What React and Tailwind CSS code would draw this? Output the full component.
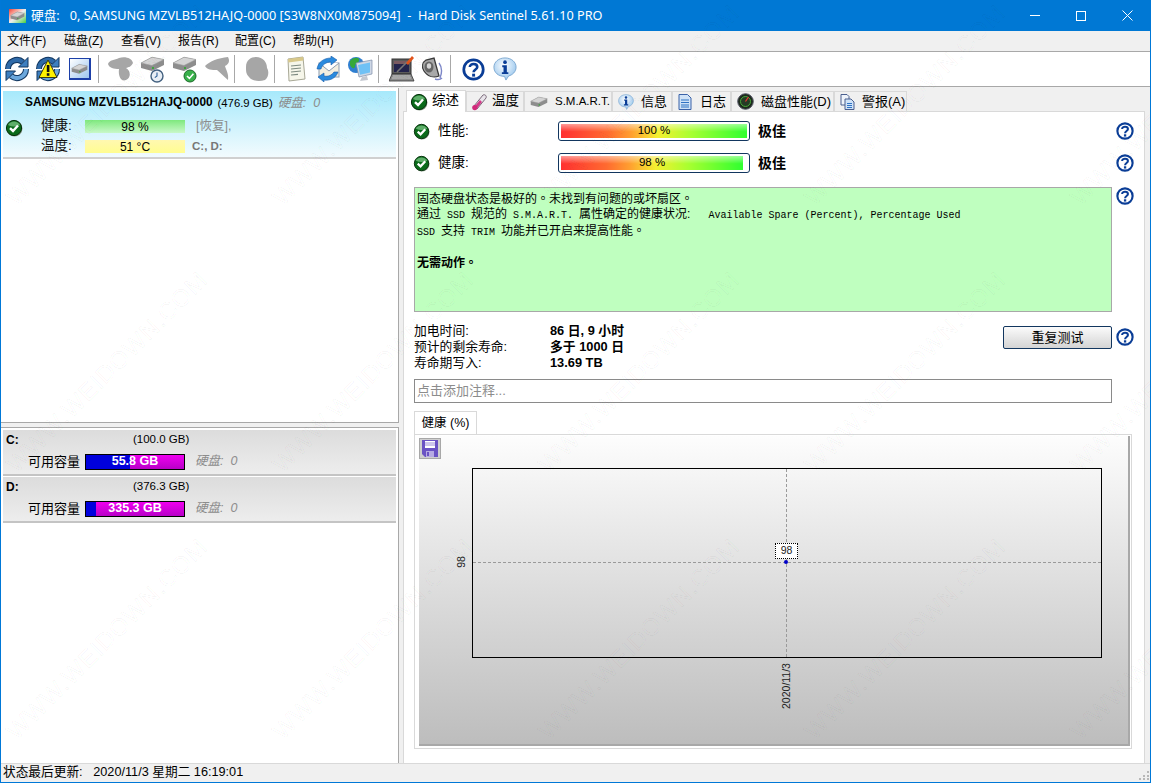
import React from "react";

const SANS = "font-['Liberation_Sans','Noto_Sans_CJK_SC',sans-serif]";

function Check({ size = 18 }) {
  return (
    <svg width={size} height={size} viewBox="0 0 18 18" className="shrink-0">
      <circle cx="9.5" cy="9.5" r="8" fill="#8a9a8a" />
      <circle cx="9" cy="9" r="7.6" fill="#0a6a1a" stroke="#06300c" strokeWidth="1" />
      <path d="M3 6 A7 7 0 0 1 15 6 Q9 9 3 6Z" fill="#5fae6a" />
      <path d="M5 9.2 L8 12 L13 6.5" fill="none" stroke="#fff" strokeWidth="2.4" />
    </svg>
  );
}

function Help({ size = 18 }) {
  return (
    <svg width={size} height={size} viewBox="0 0 22 22" className="shrink-0">
      <circle cx="11" cy="11" r="9.3" fill="#fff" stroke="#0a3d96" strokeWidth="2.6" />
      <path d="M7.5 8.5 C7.5 4.8 14.6 4.8 14.6 8.6 C14.6 11 11.1 11 11.1 13.6" fill="none" stroke="#0a3d96" strokeWidth="2.5" />
      <rect x="9.7" y="15" width="2.8" height="2.8" fill="#0a3d96" />
    </svg>
  );
}

function Info({ size = 26 }) {
  return (
    <svg width={size} height={size} viewBox="0 0 26 26" className="shrink-0">
      <defs>
        <radialGradient id="ib" cx="0.45" cy="0.35" r="0.7">
          <stop offset="0" stopColor="#ffffff" />
          <stop offset="1" stopColor="#8fc1ec" />
        </radialGradient>
      </defs>
      <path d="M13 1 C20 1 25 5.5 25 11 C25 16 21 19.5 17 20.5 L14 25 L12.5 21 C6 21 1 17 1 11 C1 5.5 6 1 13 1Z" fill="url(#ib)" stroke="#7aa6cf" />
      <circle cx="13" cy="5.6" r="2" fill="#0a3d96" />
      <path d="M10 9 H15 V16.5 H16.6 V18.5 H9.6 V16.5 H11.4 V11 H10Z" fill="#0a3d96" />
    </svg>
  );
}

function Refresh({ warn }) {
  return (
    <svg width="28" height="28" viewBox="0 0 28 28">
      <path d="M5 14 A9 9 0 0 1 20 7.3" fill="none" stroke="#12365f" strokeWidth="6" />
      <path d="M5 14 A9 9 0 0 1 20 7.3" fill="none" stroke="#2f6aa8" strokeWidth="4" />
      <path d="M23 14 A9 9 0 0 1 8 20.7" fill="none" stroke="#12365f" strokeWidth="6" />
      <path d="M23 14 A9 9 0 0 1 8 20.7" fill="none" stroke="#6ba7dc" strokeWidth="4" />
      <path d="M25 2.5 V12 H15.5Z" fill="#3d7fc0" stroke="#12365f" strokeWidth="1" />
      <path d="M3 25.5 V16 H12.5Z" fill="#3d7fc0" stroke="#12365f" strokeWidth="1" />
      {warn && (
        <>
          <path d="M14 5 L23 22.5 H5Z" fill="#fff200" stroke="#3a3a10" strokeWidth="1" />
          <rect x="12.8" y="10" width="2.6" height="7" fill="#111" />
          <rect x="12.8" y="18.2" width="2.6" height="2.6" fill="#111" />
        </>
      )}
    </svg>
  );
}

function DiskShape() {
  return (
    <g>
      <path d="M1 7 L12 1 L24 3.5 V9 L12 15 L1 12Z" fill="#8d8d8d" />
      <path d="M1 7 L12 1.2 L24 3.5 L12 9.5Z" fill="#d4d4d4" stroke="#9a9a9a" strokeWidth="0.6" />
      <rect x="12" y="11" width="2" height="2" fill="#3fa33f" />
    </g>
  );
}

function DiskButton() {
  return (
    <div className="w-[22px] h-[22px] border border-[#1c3fa8] bg-linear-to-br from-[#ffffff] to-[#9ec6ee] border-r-2 border-b-2 flex items-center justify-center">
      <svg width="17" height="14" viewBox="0 0 25 16"><DiskShape /></svg>
    </div>
  );
}

function Blob1() {
  return (
    <svg width="27" height="26" viewBox="0 0 27 26">
      <path d="M1 8 C2 4 8 4 12 2 C18 0 25 2 26 7 C24 11 22 11 19 12 C24 15 24 22 19 24 C14 26 11 20 12 13 C7 13 2 12 1 8Z" fill="#a6a6a6" />
    </svg>
  );
}
function Blob2() {
  return (
    <svg width="26" height="26" viewBox="0 0 26 26">
      <path d="M1 10 C6 5 14 2 24 1 C26 5 25 8 21 10 C22 14 25 18 24 24 C20 21 17 17 13 14 C8 14 3 14 1 10Z" fill="#a6a6a6" />
    </svg>
  );
}
function Blob3() {
  return (
    <svg width="26" height="26" viewBox="0 0 26 26">
      <path d="M2 11 C2 4 7 1 12 1 C19 1 23 6 23 12 C25 15 25 21 21 24 C15 26 8 25 5 21 C2 18 2 15 2 11Z" fill="#a6a6a6" />
    </svg>
  );
}
function DiskClock({ ok }) {
  return (
    <svg width="27" height="27" viewBox="0 0 27 27">
      <DiskShape />
      {ok ? (
        <>
          <circle cx="18" cy="20" r="6" fill="#38b04a" stroke="#1c6a2a" />
          <path d="M15 20 L17.4 22.4 L21.4 17.8" fill="none" stroke="#fff" strokeWidth="1.6" />
        </>
      ) : (
        <>
          <circle cx="17" cy="20" r="6" fill="#e8eef5" stroke="#43607f" strokeWidth="1.4" />
          <path d="M17 16.5 V20 L14.8 21.6" fill="none" stroke="#2d5f96" strokeWidth="1.1" />
        </>
      )}
    </svg>
  );
}
function Notes() {
  return (
    <svg width="22" height="26" viewBox="0 0 22 26">
      <path d="M3 3 L18 1 L20 23 L4 25Z" fill="#f6f6ea" stroke="#a8a896" />
      <path d="M3 3 L18 1 L18.4 4.5 L3.4 6.5Z" fill="#d8c88a" />
      <path d="M6 10 L16 9 M6 13 L16 12 M6 16 L16 15 M6 19 L13 18.4" stroke="#7d8a80" strokeWidth="1.2" />
    </svg>
  );
}
function MailIcon() {
  return (
    <svg width="24" height="26" viewBox="0 0 24 26">
      <rect x="3" y="7" width="20" height="14" fill="#f2eee0" stroke="#8b9bb0" />
      <path d="M3 7 L13 15 L23 7" fill="#fff" stroke="#8b9bb0" />
      <path d="M1 13 C2 6 8 2 15 2 L15 0 L21 4 L15 9 L15 6 C10 6 6 9 5 13Z" fill="#2a8ade" stroke="#1a5da8" strokeWidth="0.6" />
      <path d="M22 16 C20 22 14 25 8 24 L8 26 L2 21 L8 17 L8 20 C12 21 16 19 18 16Z" fill="#2a8ade" stroke="#1a5da8" strokeWidth="0.6" />
    </svg>
  );
}
function GlobeIcon() {
  return (
    <svg width="26" height="26" viewBox="0 0 26 26">
      <circle cx="9" cy="9" r="8" fill="#2f7fd0" />
      <path d="M3 5 C6 1 11 1 12 3 C13 7 8 7 8 10 C8 14 4 12 3 9Z" fill="#35a83a" />
      <path d="M9 7 L25 4 V18 L12 21Z" fill="#cfd8e6" stroke="#7e8ea8" strokeWidth="0.7" />
      <path d="M11 9 L23 6.6 V16.6 L13 18.8Z" fill="#6fc1f5" />
      <path d="M15 21 L20 20 L21 24 L13 25Z" fill="#c4c8d0" />
    </svg>
  );
}
function LaptopIcon() {
  return (
    <svg width="26" height="28" viewBox="0 0 26 28">
      <rect x="3" y="4" width="19" height="15" fill="#5c5c5c" stroke="#333" />
      <rect x="5" y="6" width="15" height="11" fill="#24244c" />
      <path d="M5 6 H20 V9 H5Z" fill="#7a5a60" />
      <path d="M3 19 H22 L25 26 H0Z" fill="#8e8e8e" stroke="#333" strokeWidth="0.8" />
      <path d="M4 21 H21 M3 23 H22" stroke="#d0d0d0" strokeWidth="0.8" />
      <path d="M8 17 L18 7" stroke="#777" strokeWidth="1.6" />
      <path d="M17 8 L23 1 L25 3 L19 10Z" fill="#e2531a" />
    </svg>
  );
}
function SpeakerIcon() {
  return (
    <svg width="24" height="26" viewBox="0 0 24 26">
      <path d="M14 2 L19 20 C14 22 8 21 4 15 C1 10 3 6 6 4Z" fill="#a9a9a9" stroke="#3a3a3a" strokeWidth="1.3" />
      <ellipse cx="9" cy="11" rx="4.5" ry="5.5" fill="#666" />
      <ellipse cx="9" cy="10" rx="2.2" ry="2.8" fill="#d5d5d5" />
      <path d="M19 7 C22 11 22 17 20 22 M15 23 C18 24 20 24 22 22" fill="none" stroke="#7d87c8" strokeWidth="1.4" />
    </svg>
  );
}
function Thermo() {
  return (
    <svg width="17" height="18" viewBox="0 0 17 18">
      <path d="M3 13 L12 2 C14 1 16 3 15 5 L6 16Z" fill="#e8e4ea" stroke="#7a6a7a" />
      <path d="M3.5 13.5 L9 7 L11 9 L6 15.5Z" fill="#d43a8a" />
      <circle cx="3.8" cy="14.6" r="2.6" fill="#d02a7a" />
    </svg>
  );
}
function SmallDisk() {
  return <svg width="18" height="12" viewBox="0 0 25 16"><DiskShape /></svg>;
}
function Doc() {
  return (
    <svg width="14" height="16" viewBox="0 0 14 16">
      <path d="M1 0.5 H9.5 L13 4 V15.5 H1Z" fill="#cfe2f7" stroke="#3a62a8" />
      <path d="M3 6 H11 M3 8.5 H11 M3 11 H11 M3 13 H11" stroke="#2f72c4" strokeWidth="1.1" />
    </svg>
  );
}
function Gauge() {
  return (
    <svg width="17" height="17" viewBox="0 0 17 17">
      <circle cx="8.5" cy="8.5" r="7.8" fill="#1c2a1c" stroke="#556" />
      <circle cx="8.5" cy="8.5" r="5" fill="#253a25" stroke="#49a83a" strokeWidth="1" />
      <path d="M8.5 8.5 L11.5 4" stroke="#e33" strokeWidth="1.2" />
    </svg>
  );
}
function Docs() {
  return (
    <svg width="15" height="16" viewBox="0 0 15 16">
      <path d="M1 0.5 H7 L9 2.5 V11 H1Z" fill="#eef3fa" stroke="#4a5f8f" />
      <path d="M5 5 H11 L14 8 V15.5 H5Z" fill="#cfe2f7" stroke="#4a5f8f" />
      <path d="M7 9.5 H12 M7 11.5 H12 M7 13.5 H12" stroke="#2f72c4" />
    </svg>
  );
}
function Save() {
  return (
    <div className="w-[22px] h-[21px] bg-[#cfcfcf] border border-[#a8a8a8] flex items-center justify-center">
      <svg width="16" height="17" viewBox="0 0 16 17">
        <path d="M0 0 H16 V17 H3 L0 14Z" fill="#6a52c4" />
        <rect x="3" y="1" width="10" height="7" fill="#fff" />
        <path d="M3 3 H13 M3 5 H13" stroke="#9a8ad8" />
        <rect x="4" y="11" width="8" height="6" fill="#b7abe3" />
        <rect x="5" y="12" width="2" height="4" fill="#6a52c4" />
      </svg>
    </div>
  );
}

const Sep = () => <div className="w-[2px] h-[28px] bg-[#a8a8a8] border-r border-white shrink-0" />;

function Menu({ zh, k, w }) {
  return <span className={w}>{zh}({k})</span>;
}

function Tab({ icon, label, w, active, text = "text-[13px]", pad = "gap-[7px] pl-[5px]" }) {
  return (
    <div
      className={
        active
          ? `${w} h-[22px] -mb-px z-10 bg-white border border-b-0 border-[#d9d9d9] flex items-center gap-[4px] pl-[3px]`
          : `${w} h-[20px] bg-[#f0f0f0] border border-b-0 border-[#d9d9d9] flex items-center ${pad} overflow-hidden whitespace-nowrap`
      }
    >
      {icon}
      <span className={`${text} text-black`}>{label}</span>
    </div>
  );
}

function LevelBar({ pct, right }) {
  return (
    <div className="w-[192px] h-[20px] border border-[#12365f] rounded-[3px] p-[2px] bg-white">
      <div className={`h-full ${right} relative bg-[linear-gradient(to_bottom,rgba(255,255,255,0.5),rgba(255,255,255,0)_55%),linear-gradient(to_right,#ff3030,#ff6a30_25%,#ffa030_38%,#f5f030_52%,#a8ff30_70%,#30ff30)] flex items-center justify-center text-[11.5px] text-black`}>
        {pct}
      </div>
    </div>
  );
}

function PartRow({ letter, size, free, blue, boxClass }) {
  return (
    <div className={`${boxClass} mx-[2px] bg-linear-to-b from-[#dcdcdc] to-[#ededed] border-b-[2px] border-[#c4c4c4]`}>
      <div className="flex h-[20px] items-center text-[11.5px]">
        <span className="font-bold w-[130px] pl-[3px] text-[12px]">{letter}</span>
        <span>{size}</span>
      </div>
      <div className="flex items-center mt-[3px] h-[17px] text-[12.5px]">
        <span className="w-[82px] pl-[25px] whitespace-nowrap text-[13px]">可用容量</span>
        <div className="relative w-[100px] h-[16px] border border-black bg-linear-to-b from-[#f000f0] to-[#b800c8] flex items-center justify-center">
          <div className={`absolute left-0 top-0 bottom-0 ${blue} bg-[#0000dc]`} />
          <span className="relative text-white font-bold text-[12.5px]">{free}</span>
        </div>
        <span className="ml-[10px] italic text-[#8c8c8c] text-[12.5px]">硬盘:&nbsp; 0</span>
      </div>
    </div>
  );
}

const Mono = ({ children }) => <span className="text-[10px] leading-none font-['Liberation_Mono',monospace]">{children}</span>;

const marks = Array.from({ length: 20 });

export default function App() {
  return (
    <div className={`relative w-[1151px] h-[783px] overflow-hidden flex flex-col bg-[#f0f0f0] border-x border-b border-[#0078d7] text-black ${SANS}`}>
      {/* title bar */}
      <div className="h-[31px] shrink-0 bg-[#0078d4] flex items-center text-white text-[12.7px] font-['Noto_Sans','Noto_Sans_CJK_SC',sans-serif]">
        <div className="ml-[8px] w-[17px] h-[14px] bg-linear-to-br from-[#e33] via-[#eee] to-[#3c3] flex items-center justify-center">
          <svg width="15" height="10" viewBox="0 0 25 16"><DiskShape /></svg>
        </div>
        <span className="ml-[5px] whitespace-pre">硬盘:   0, SAMSUNG MZVLB512HAJQ-0000 [S3W8NX0M875094]  -  Hard Disk Sentinel 5.61.10 PRO</span>
        <div className="ml-auto flex items-center">
          <div className="w-[46px] flex justify-center"><div className="w-[10px] h-px bg-white" /></div>
          <div className="w-[46px] flex justify-center"><div className="w-[10px] h-[10px] border border-white" /></div>
          <div className="w-[46px] flex justify-center">
            <svg width="11" height="11" viewBox="0 0 11 11"><path d="M0.5 0.5 L10.5 10.5 M10.5 0.5 L0.5 10.5" stroke="#fff" /></svg>
          </div>
        </div>
      </div>
      {/* menu bar */}
      <div className="h-[20px] shrink-0 bg-[#f0f0f0] flex items-center pl-[6px] text-[12px]">
        <Menu zh="文件" k="F" w="w-[57px]" />
        <Menu zh="磁盘" k="Z" w="w-[57px]" />
        <Menu zh="查看" k="V" w="w-[57px]" />
        <Menu zh="报告" k="R" w="w-[57px]" />
        <Menu zh="配置" k="C" w="w-[58px]" />
        <Menu zh="帮助" k="H" w="w-[57px]" />
      </div>
      {/* toolbar */}
      <div className="h-[36px] shrink-0 bg-white border-y border-[#a8a8a8] flex items-center pl-[2px]">
        <div className="w-[28px] flex justify-center"><Refresh /></div>
        <div className="w-[28px] ml-[3px] flex justify-center"><Refresh warn /></div>
        <div className="ml-[7px]"><DiskButton /></div>
        <div className="ml-[7px]"><Sep /></div>
        <div className="ml-[7px]"><Blob1 /></div>
        <div className="ml-[6px]"><DiskClock /></div>
        <div className="ml-[5px]"><DiskClock ok /></div>
        <div className="ml-[5px]"><Blob2 /></div>
        <div className="ml-[4px]"><Sep /></div>
        <div className="ml-[8px]"><Blob3 /></div>
        <div className="ml-[4px]"><Sep /></div>
        <div className="ml-[9px]"><Notes /></div>
        <div className="ml-[9px]"><MailIcon /></div>
        <div className="ml-[7px]"><GlobeIcon /></div>
        <div className="ml-[5px]"><Sep /></div>
        <div className="ml-[9px]"><LaptopIcon /></div>
        <div className="ml-[5px]"><SpeakerIcon /></div>
        <div className="ml-[6px]"><Sep /></div>
        <div className="ml-[10px]"><Help size={23} /></div>
        <div className="ml-[8px]"><Info size={24} /></div>
      </div>

      {/* main */}
      <div className="flex-1 min-h-0 flex bg-[#f0f0f0] border-b border-[#d9d9d9] pt-[1px]">
        {/* left column */}
        <div className="w-[398px] shrink-0 flex flex-col">
          <div className="h-[335px] bg-white border-r border-b border-[#a8a8a8] pt-[3px]">
            <div className="mx-[2px] h-[68px] border-b-[2px] border-[#d0d0d0] bg-linear-to-b from-[#a6e9fb] to-[#f2fbfe]">
              <div className="h-[24px] flex items-center pl-[22px] whitespace-nowrap">
                <span className="font-bold text-[11.85px]">SAMSUNG MZVLB512HAJQ-0000</span>
                <span className="ml-[5px] text-[11.3px]">(476.9 GB)</span>
                <span className="ml-[5px] italic text-[#8c8c8c] text-[12.5px]">硬盘:&nbsp; 0</span>
              </div>
              <div className="flex mt-[3px]">
                <div className="w-[22px] pl-[2px] pt-px"><Check /></div>
                <div className="flex flex-col gap-[5px] pt-[1px] text-[13.5px]">
                  <div className="flex items-center h-[15px]">
                    <span className="w-[60px] pl-[16px] text-[#111]">健康:</span>
                    <div className="w-[100px] h-[13px] bg-linear-to-b from-[#7de87d] to-[#c8f8c8] flex items-center justify-center text-[12px] leading-none">98 %</div>
                    <span className="ml-[11px] text-[12.5px] text-[#8c8c8c]">[恢复],</span>
                  </div>
                  <div className="flex items-center h-[15px]">
                    <span className="w-[60px] pl-[16px] text-[#111]">温度:</span>
                    <div className="w-[100px] h-[13px] bg-linear-to-b from-[#fff8b0] to-[#fffd90] flex items-center justify-center text-[12px] leading-none">51 °C</div>
                    <span className="ml-[7px] text-[11.5px] font-bold text-[#777]">C:, D:</span>
                  </div>
                </div>
              </div>
            </div>
          </div>
          <div className="h-[4px] shrink-0" />
          <div className="flex-1 bg-white border-r border-t border-[#a8a8a8] pt-[2px]">
            <PartRow letter="C:" size="(100.0 GB)" free="55.8 GB" blue="w-[44px]" boxClass="h-[46px]" />
            <div className="h-px" />
            <PartRow letter="D:" size="(376.3 GB)" free="335.3 GB" blue="w-[10px]" boxClass="h-[46px]" />
          </div>
        </div>

        {/* right column */}
        <div className="flex-1 min-w-0 flex flex-col pl-[4px] pr-[5px]">
          <div className="h-[22px] shrink-0 flex items-end ml-[3px] mt-[1px]">
            <Tab w="w-[60px]" active icon={<Check />} label="综述" text="text-[13.5px]" />
            <Tab w="w-[58px]" icon={<Thermo />} label="温度" pad="gap-[4px] pl-[4px]" text="text-[13.5px]" />
            <Tab w="w-[88px]" icon={<SmallDisk />} label="S.M.A.R.T." pad="gap-[7px] pl-[5px]" text="text-[11.5px]" />
            <Tab w="w-[60px]" icon={<Info size={16} />} label="信息" />
            <Tab w="w-[59px]" icon={<Doc />} label="日志" pad="gap-[8px] pl-[5px]" />
            <Tab w="w-[103px]" icon={<Gauge />} label="磁盘性能(D)" />
            <Tab w="w-[73px]" icon={<Docs />} label="警报(A)" />
          </div>
          <div className="flex-1 min-h-0 bg-white border border-b-0 border-[#d9d9d9] pl-[10px] pr-[10px]">
            {[
              ["性能:", "100 %", "w-full", "mt-[9px]"],
              ["健康:", "98 %", "w-[182px]", "mt-[12px]"],
            ].map(([l, p, r, mt]) => (
              <div key={l} className={`flex items-center h-[20px] ${mt}`}>
                <div className="-ml-px"><Check size={17} /></div>
                <span className="ml-[8px] w-[120px] text-[13.5px]">{l}</span>
                <LevelBar pct={p} right={r} />
                <span className="ml-[8px] font-bold text-[14px]">极佳</span>
                <div className="ml-auto"><Help /></div>
              </div>
            ))}
            <div className="flex mt-[14px] items-start">
              <div className="w-[698px] h-[125px] bg-[#bfffbf] border border-[#a8a8a8] pl-[2px] pt-[3px] text-[12px] whitespace-pre font-['Liberation_Sans','Noto_Sans_CJK_TC',sans-serif]">
                <div className="h-[16px] leading-[16px]">固态硬盘状态是极好的。未找到有问题的或坏扇区。</div>
                <div className="h-[16px] leading-[14px]">通过<Mono> SSD </Mono>规范的<Mono> S.M.A.R.T. </Mono>属性确定的健康状况:<Mono>   Available Spare (Percent), Percentage Used</Mono></div>
                <div className="h-[16px] leading-[16px]"><Mono>SSD </Mono>支持<Mono> TRIM </Mono>功能并已开启来提高性能。</div>
                <div className="h-[16px] leading-[16px] mt-[16px] font-bold">无需动作。</div>
              </div>
              <div className="ml-auto"><Help /></div>
            </div>
            <div className="flex mt-[11px] items-start">
              <div className="grid grid-cols-[136px_453px] whitespace-nowrap text-[12.8px] leading-[16px]">
                <span>加电时间:</span><span className="font-bold">86 日, 9 小时</span>
                <span>预计的剩余寿命:</span><span className="font-bold">多于 1000 日</span>
                <span>寿命期写入:</span><span className="font-bold">13.69 TB</span>
              </div>
              <div className="mt-[3px] w-[109px] h-[23px] rounded-[2px] border border-[#12365f] bg-linear-to-b from-[#fbfbfb] to-[#d4d4d4] flex items-center justify-center text-[13px]">重复测试</div>
              <div className="ml-auto mt-[5px]"><Help /></div>
            </div>
            <div className="w-[698px] h-[24px] mt-[8px] border border-[#8a8a8a] flex items-center pl-[2px] text-[13px] text-[#8c8c8c]">点击添加注释...</div>
            <div className="mt-[8px] w-[63px] h-[23px] border border-b-0 border-[#d9d9d9] bg-white flex items-center justify-center text-[12.5px]">健康 (%)</div>
            <div className="w-[718px] h-[315px] border border-[#d9d9d9] pl-[4px] pr-[1px] pt-[1px] pb-[2px]">
              <div className="h-full border-r-2 border-b-2 border-[#a8a8a8] bg-linear-to-b from-[#fdfdfd] to-[#bdbdbd] flex flex-col">
                <div className="pt-[2px]"><Save /></div>
                <div className="relative ml-[53px] mt-[9px] w-[630px] h-[190px] border border-black">
                  {/* chart overlay */}
                  <div className="absolute left-0 right-0 top-[93px] border-t border-dashed border-[#9a9a9a]" />
                  <div className="absolute top-0 bottom-0 left-[313px] border-l border-dashed border-[#9a9a9a]" />
                  <div className="absolute left-[302px] top-[74px] w-[23px] h-[16px] bg-white border border-dotted border-black flex items-center justify-center text-[10.5px] text-[#222]">98</div>
                  <div className="absolute left-[311px] top-[91px] w-[4px] h-[4px] rounded-full bg-[#0000c8]" />
                  <div className="absolute left-[-18px] top-[87px] text-[10.5px] leading-[12px] -rotate-90 text-[#222]">98</div>
                  <div className="absolute left-[288px] top-[211px] w-[50px] text-center whitespace-nowrap text-[10.5px] leading-[12px] -rotate-90 text-[#222]">2020/11/3</div>
                </div>
              </div>
            </div>
          </div>
        </div>
      </div>

      {/* status bar */}
      <div className="h-[18px] shrink-0 bg-[#f0f0f0] flex items-center pl-[2px] text-[12.7px] whitespace-pre">
        <span>状态最后更新:   2020/11/3 星期二 16:19:01</span>
        <svg width="10" height="10" viewBox="0 0 10 10" className="ml-auto mr-[1px] mt-[4px]">
          <path d="M8 1h2v2H8zM4 5h2v2H4zM8 5h2v2H8zM0 8h2v2H0zM4 8h2v2H4zM8 8h2v2H8z" fill="#b8b8b8" />
        </svg>
      </div>

      {/* watermark */}
      <div className="pointer-events-none absolute left-[-27px] top-[-29px] grid grid-cols-[repeat(5,266px)] auto-rows-[267px]">
        {marks.map((_, i) => (
          <div key={i} className="flex items-center justify-center">
            <span className="-rotate-45 whitespace-nowrap text-[24px] tracking-[1px] font-['Liberation_Sans',sans-serif] text-transparent [-webkit-text-stroke:1px_rgba(0,0,0,0.035)]">WWW.WEIDOWN.COM</span>
          </div>
        ))}
      </div>
    </div>
  );
}
